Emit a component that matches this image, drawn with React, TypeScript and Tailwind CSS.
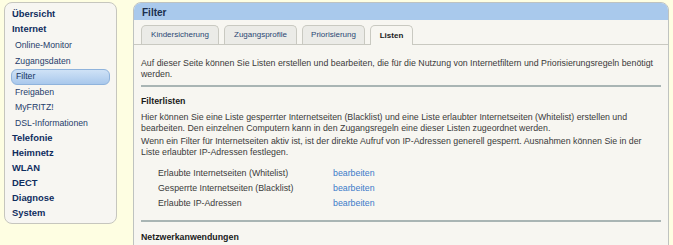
const mainNav = ["Telefonie", "Heimnetz", "WLAN", "DECT", "Diagnose", "System"];
const subNav = ["Online-Monitor", "Zugangsdaten", "Filter", "Freigaben", "MyFRITZ!", "DSL-Informationen"];

const tabs = [
  { label: "Kindersicherung", w: "w-[78px]" },
  { label: "Zugangsprofile", w: "w-[73px]" },
  { label: "Priorisierung", w: "w-[63px]" },
  { label: "Listen", w: "w-[43px]", active: true },
];

const lists = [
  "Erlaubte Internetseiten (Whitelist)",
  "Gesperrte Internetseiten (Blacklist)",
  "Erlaubte IP-Adressen",
];

function Sidebar() {
  return (
    <div className="w-[113px] h-[222px] shrink-0 rounded-[8px] border border-[#c6c6be] bg-[#f7f6f2] pt-[4px] px-[7px]">
      <div className="h-[15px] flex items-center text-[9.4px] font-bold text-[#0f2d5e]">Übersicht</div>
      <div className="h-[15px] flex items-center text-[9.4px] font-bold text-[#0f2d5e]">Internet</div>
      <div className="mt-[1px]">
        {subNav.map((item) =>
          item === "Filter" ? (
            <div
              key={item}
              className="h-[15.5px] -mx-[1px] flex items-center px-[4px] rounded-[6px] border border-[#8fb3dc] bg-gradient-to-b from-[#cfe2f6] to-[#a9c8ec] text-[8.7px] text-[#17335f]"
            >
              {item}
            </div>
          ) : (
            <div key={item} className="h-[15.5px] flex items-center pl-[3px] text-[8.7px] text-[#1f3d6b]">
              {item}
            </div>
          )
        )}
      </div>
      {mainNav.map((item) => (
        <div key={item} className="h-[15px] flex items-center text-[9.4px] font-bold text-[#0f2d5e]">
          {item}
        </div>
      ))}
    </div>
  );
}

export default function App() {
  return (
    <div
      className="w-[673px] h-[245px] overflow-hidden bg-[#fefee2] flex items-start pt-[2px] pl-[4px] gap-[16px]"
      style={{ fontFamily: '"Liberation Sans", Arial, sans-serif' }}
    >
      <Sidebar />
      <div className="w-[536px] h-[260px] shrink-0 rounded-t-[8px] border border-[#bfc3c0] bg-[#f7f6f1] overflow-hidden">
        <div className="h-[17px] bg-[#a9c9ec] flex items-center pl-[8px] pt-[1px] text-[10px] font-bold text-[#1b2f4e]">
          Filter
        </div>
        <div className="pt-[5px] px-[7px] flex gap-[5px] border-b border-[#c9c9c1]">
          {tabs.map((t) =>
            t.active ? (
              <div
                key={t.label}
                className={`${t.w} h-[20px] -mb-px rounded-t-[5px] border border-b-0 border-[#c9c9c1] bg-[#f7f6f1] flex items-center justify-center text-[8px] font-bold text-[#1a1a1a]`}
              >
                {t.label}
              </div>
            ) : (
              <div
                key={t.label}
                className={`${t.w} h-[19px] rounded-t-[5px] border border-b-0 border-[#c9c9c1] bg-[#ebebe7] flex items-center justify-center text-[8px] text-[#2a4773]`}
              >
                {t.label}
              </div>
            )
          )}
        </div>
        <div className="px-[7px] text-[8.8px] leading-[11px] text-[#3a3a3a]">
          <p className="mt-[13px] pr-[4px]">
            Auf dieser Seite können Sie Listen erstellen und bearbeiten, die für die Nutzung von Internetfiltern und Priorisierungsregeln benötigt werden.
          </p>
          <div className="mt-[5px] h-[2px] bg-[#a9b5b4]" />
          <div className="mt-[9px] font-bold text-[#1a1a1a]">Filterlisten</div>
          <p className="mt-[5px]">
            Hier können Sie eine Liste gesperrter Internetseiten (Blacklist) und eine Liste erlaubter Internetseiten (Whitelist) erstellen und bearbeiten. Den einzelnen Computern kann in den Zugangsregeln eine dieser Listen zugeordnet werden.
          </p>
          <p className="mt-[2px]">
            Wenn ein Filter für Internetseiten aktiv ist, ist der direkte Aufruf von IP-Adressen generell gesperrt. Ausnahmen können Sie in der Liste erlaubter IP-Adressen festlegen.
          </p>
          <div className="mt-[8px] pl-[17px]">
            {lists.map((l) => (
              <div key={l} className="h-[15px] flex items-center">
                <span className="w-[175px]">{l}</span>
                <span className="text-[#3b7ac9]">bearbeiten</span>
              </div>
            ))}
          </div>
          <div className="mt-[9px] h-[2px] bg-[#a9b5b4]" />
          <div className="mt-[10px] font-bold text-[#1a1a1a]">Netzwerkanwendungen</div>
        </div>
      </div>
    </div>
  );
}
